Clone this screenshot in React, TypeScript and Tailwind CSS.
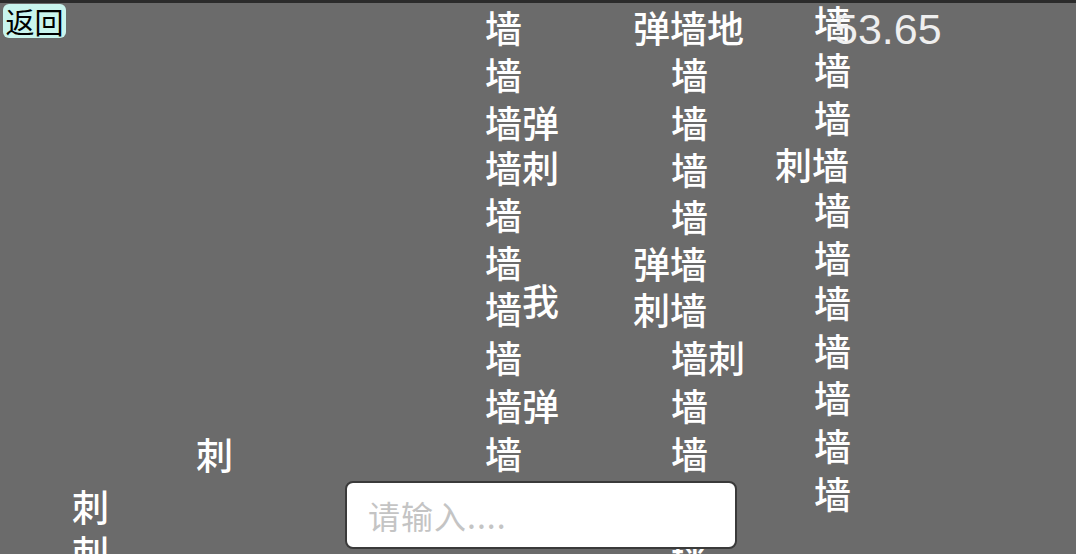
import React from "react";

type Piece = { t: string; x: number; y: number };

// 棋盘上每一格的位置(左上角)
const pieces: Piece[] = [
    // 第一列
    {t: "墙", x: 486, y: 10},
    {t: "墙", x: 486, y: 57},
    {t: "墙弹", x: 486, y: 105},
    {t: "墙刺", x: 486, y: 150},
    {t: "墙", x: 486, y: 197},
    {t: "墙", x: 486, y: 245},
    {t: "墙", x: 486, y: 291},
    {t: "我", x: 523, y: 283},
    {t: "墙", x: 486, y: 340},
    {t: "墙弹", x: 486, y: 388},
    {t: "墙", x: 486, y: 436},
    // 第二列
    {t: "弹墙地", x: 634, y: 10},
    {t: "墙", x: 672, y: 57},
    {t: "墙", x: 672, y: 105},
    {t: "墙", x: 672, y: 152},
    {t: "墙", x: 672, y: 199},
    {t: "弹墙", x: 634, y: 246},
    {t: "刺墙", x: 634, y: 292},
    {t: "墙刺", x: 672, y: 340},
    {t: "墙", x: 672, y: 388},
    {t: "墙", x: 672, y: 436},
    {t: "墙", x: 672, y: 484},
    {t: "墙", x: 672, y: 540},
    // 第三列
    {t: "墙", x: 815, y: 5},
    {t: "墙", x: 815, y: 52},
    {t: "墙", x: 815, y: 100},
    {t: "刺墙", x: 776, y: 147},
    {t: "墙", x: 815, y: 192},
    {t: "墙", x: 815, y: 240},
    {t: "墙", x: 815, y: 285},
    {t: "墙", x: 815, y: 333},
    {t: "墙", x: 815, y: 380},
    {t: "墙", x: 815, y: 428},
    {t: "墙", x: 815, y: 476},
    // 左下
    {t: "刺", x: 197, y: 437},
    {t: "刺", x: 73, y: 489},
    {t: "刺", x: 73, y: 535},
];

export default function App() {
    return (
        <div
            className="relative w-[1076px] h-[554px] overflow-hidden bg-[#6b6b6b] border-t-[3px] border-[#2b2b2b]"
            style={{fontFamily: '"Noto Sans CJK SC", "Noto Sans", sans-serif'}}>
            {pieces.map((p, i) => (
                <span
                    key={i}
                    className="absolute text-[37px] leading-[37px] font-medium text-white whitespace-nowrap"
                    style={{left: p.x - 1, top: p.y - 4}}>
                    {p.t}
                </span>
            ))}
            <span
                className="absolute left-[834px] top-[5px] text-[43px] leading-[43px] text-[#efefef] font-['Liberation_Sans',sans-serif]">
                53.65
            </span>
            <button
                className="absolute left-[3px] top-[1px] w-[63px] h-[34px] rounded-md bg-[#c9f5ee] text-black text-[29px] leading-[34px] flex items-center justify-center">
                返回
            </button>
            <div
                className="absolute left-[345px] top-[478px] w-[392px] h-[68px] rounded-lg bg-white border-2 border-[#3a3a3a] flex items-center px-[21px]">
                <input
                    className="w-full bg-transparent outline-none text-[32px] tracking-[1px] placeholder:text-[#c4c4c4]"
                    placeholder="请输入...."/>
            </div>
        </div>
    );
}
